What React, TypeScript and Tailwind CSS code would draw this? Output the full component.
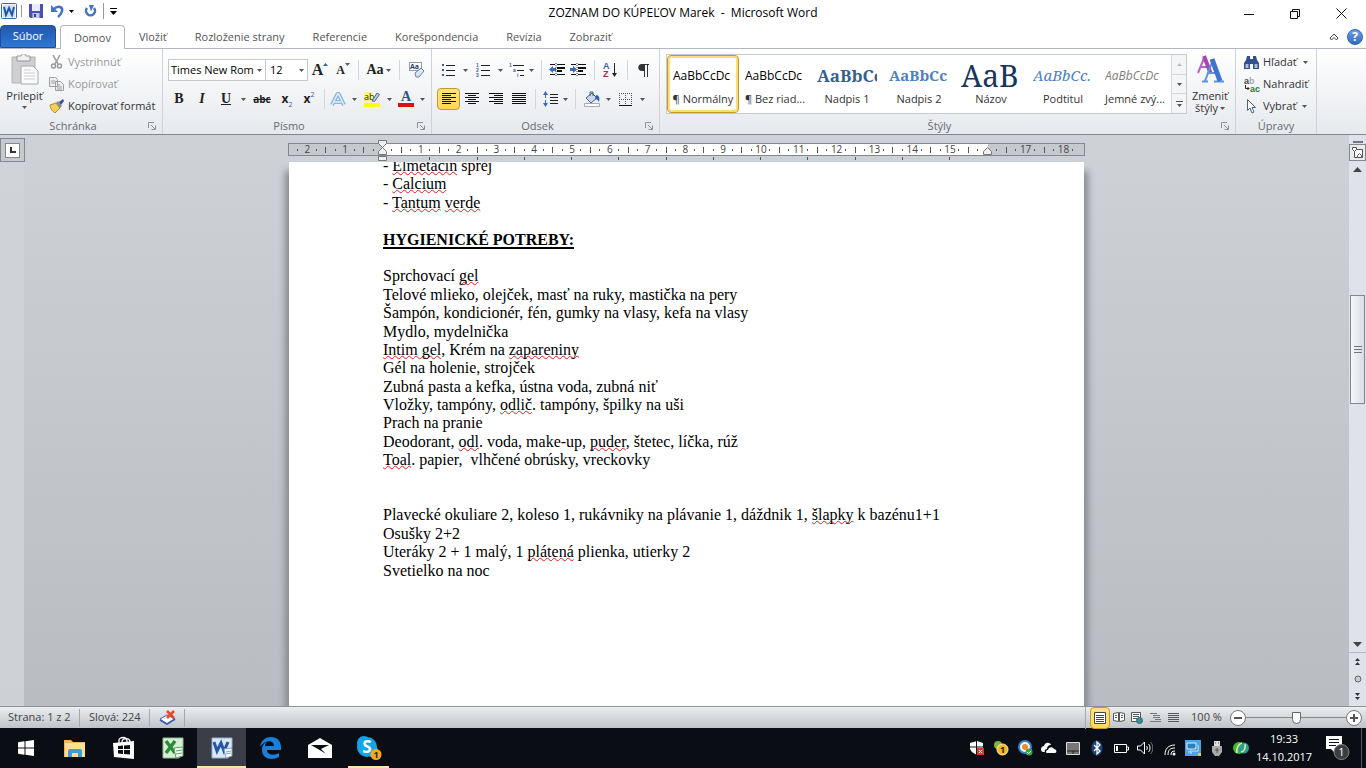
import { useState } from "react";
import type { ReactNode } from "react";

const RIBBON_TABS = ["Domov", "Vložiť", "Rozloženie strany", "Referencie", "Korešpondencia", "Revízia", "Zobraziť"];

const STYLES = [
  { name: "¶ Normálny", sample: "AaBbCcDc", look: "text-xs text-black" },
  { name: "¶ Bez riad...", sample: "AaBbCcDc", look: "text-xs text-black" },
  { name: "Nadpis 1", sample: "AaBbCc", look: "font-['Noto_Serif','Liberation_Serif',serif] font-bold text-[17px] text-[#365f91]" },
  { name: "Nadpis 2", sample: "AaBbCc", look: "font-['Noto_Serif','Liberation_Serif',serif] font-bold text-[15px] text-[#4f81bd]" },
  { name: "Názov", sample: "AaB", look: "font-['Noto_Serif','Liberation_Serif',serif] text-[30px] leading-7 text-[#17365d]" },
  { name: "Podtitul", sample: "AaBbCc.", look: "font-['Noto_Serif','Liberation_Serif',serif] italic text-[15px] text-[#4f81bd]" },
  { name: "Jemné zvý...", sample: "AaBbCcDc", look: "italic text-xs text-[#808080]" },
];

// Words between asterisks are flagged by the spell checker
const DOC_LINES = [
  "- *Elmetacin* sprej",
  "- *Calcium*",
  "- *Tantum* *verde*",
  "",
  "# HYGIENICKÉ POTREBY:",
  "",
  "Sprchovací *gel*",
  "Telové mlieko, olejček, masť na ruky, mastička na pery",
  "Šampón, kondicionér, fén, gumky na vlasy, kefa na vlasy",
  "Mydlo, mydelnička",
  "*Intim gel*, Krém na *zapareniny*",
  "Gél na holenie, strojček",
  "Zubná pasta a kefka, ústna voda, zubná niť",
  "Vložky, tampóny, *odlič*. tampóny, špilky na uši",
  "Prach na pranie",
  "Deodorant, *odl*. voda, make-up, *puder*, štetec, líčka, rúž",
  "*Toal*. papier,  vlhčené obrúsky, vreckovky",
  "",
  "",
  "Plavecké okuliare 2, koleso 1, rukávniky na plávanie 1, dáždnik 1, *šlapky* k bazénu1+1",
  "Osušky 2+2",
  "Uteráky 2 + 1 malý, 1 *plátená* plienka, utierky 2",
  "Svetielko na noc",
];

function Caret({ className = "text-[#555]" }: { className?: string }) {
  return (
    <svg width="5" height="3" viewBox="0 0 5 3" className={className}>
      <path d="M0 0h5L2.500 3z" fill="currentColor" />
    </svg>
  );
}

function Tool({ label, width, active, children }: { label: string; width: string; active?: boolean; children: ReactNode }) {
  return (
    <button
      aria-label={label}
      className={`${width} flex h-[22px] shrink-0 items-center justify-center ${
        active ? "rounded-sm border border-[#c29b29] bg-linear-to-b from-[#fde28a] to-[#ffd75e]" : ""
      }`}
    >
      {children}
    </button>
  );
}

function Sep({ width }: { width: string }) {
  return (
    <span className={`${width} flex shrink-0 justify-center`}>
      <span className="h-5 w-px bg-[#d3d6da]" />
    </span>
  );
}

function Lines({ rows, color = "#111" }: { rows: [number, number][]; color?: string }) {
  return (
    <svg width="14" height="12" viewBox="0 0 14 12" shapeRendering="crispEdges">
      {rows.map(([x, w], i) => (
        <rect key={i} x={x} y={i * 2} width={w} height="1" fill={color} />
      ))}
    </svg>
  );
}

function Group({ title, width, launcher = true, children }: { title: string; width: string; launcher?: boolean; children: ReactNode }) {
  return (
    <section className={`${width} flex shrink-0 flex-col border-r border-[#cfd2d7]`}>
      <div className="h-[69px]">{children}</div>
      <div className="flex h-4 items-center text-[#666a70]">
        <span className="flex-1 text-center">{title}</span>
        {launcher && (
          <button aria-label={`${title} – možnosti`} className="mr-1 flex w-3 justify-center">
            <svg width="8" height="8" viewBox="0 0 8 8" fill="none" stroke="#8d9299">
              <path d="M.5 6V.5H6M3 3l4 4M7.500 3.500v4h-4" />
            </svg>
          </button>
        )}
      </div>
    </section>
  );
}

function WordLogo() {
  return (
    <svg width="16" height="16" viewBox="0 0 16 16">
      <rect x=".5" y=".5" width="15" height="15" rx="1" fill="#f4f8fd" stroke="#3468b0" />
      <path d="M2 2h12v12H2z" fill="#cfe0f5" />
      <path d="M3 4l2 8L8 5l3 7 2-8" fill="none" stroke="#1f55a8" strokeWidth="2" />
    </svg>
  );
}

function TitleBar() {
  return (
    <header className="relative flex h-[25px] shrink-0 items-center bg-white">
      <div className="flex items-center pb-[3px] pl-px">
        <WordLogo />
        <span className="mx-1 h-3 w-px bg-[#999]" />
        <button aria-label="Uložiť" className="mr-2 ml-[3px]">
          <svg width="14" height="14" viewBox="0 0 14 14">
            <path d="M0 0h14v14H1.500L0 12.500z" fill="#4a4fb5" />
            <path d="M3 0h8v7H3z" fill="#e9edfb" />
            <path d="M3.500 9h7v5h-7z" fill="#c4c9e8" />
            <path d="M5 10h2v3H5z" fill="#33388f" />
          </svg>
        </button>
        <button aria-label="Späť">
          <svg width="13" height="14" viewBox="0 0 13 14" fill="none">
            <path d="M3 5C7 1 12 3 11 7c-.5 3-2.500 4.500-4 6" stroke="#4474c8" strokeWidth="2.500" />
            <path d="M0 1v7h7z" fill="#4474c8" />
          </svg>
        </button>
        <button aria-label="Možnosti späť" className="px-[5px]"><Caret className="text-black" /></button>
        <button aria-label="Opakovať" className="ml-[5px]">
          <svg width="13" height="13" viewBox="0 0 13 13" fill="none">
            <path d="M3 3a4.500 4.500 0 1 0 7 0" stroke="#4474c8" strokeWidth="2.500" />
            <path d="M5 0h5L7 6.500z" fill="#4474c8" />
          </svg>
        </button>
        <span className="mx-1.5 h-4 w-px bg-[#999]" />
        <button aria-label="Prispôsobiť panel">
          <svg width="7" height="7" viewBox="0 0 7 7"><path d="M0 0h7v1H0zM0 3h7L3.500 7z" /></svg>
        </button>
      </div>
      <h1 className="pointer-events-none absolute inset-x-0 text-center text-xs whitespace-pre text-black">
        ZOZNAM DO KÚPEĽOV Marek  -  Microsoft Word
      </h1>
      <div className="ml-auto flex h-full pt-0.5 pr-0.5">
        <button aria-label="Minimalizovať" className="flex w-[46px] items-center justify-center">
          <svg width="10" height="10"><path d="M0 5.500h10" stroke="#111" /></svg>
        </button>
        <button aria-label="Obnoviť" className="flex w-[46px] items-center justify-center">
          <svg width="10" height="10" fill="none" stroke="#111"><path d="M.5 2.500h7v7h-7zM2.500 2V.5h7v7H8" /></svg>
        </button>
        <button aria-label="Zavrieť" className="flex w-[46px] items-center justify-center">
          <svg width="11" height="11" stroke="#111"><path d="M.5.5l10 10m0-10l-10 10" /></svg>
        </button>
      </div>
    </header>
  );
}

function TabStrip() {
  const [active, setActive] = useState("Domov");
  return (
    <nav className="flex h-6 shrink-0 items-end border-b border-[#b4b8be] bg-white text-[#555]">
      <button className="mr-1 h-[23px] w-14 rounded-t-sm border border-[#1c4e9c] bg-linear-to-b from-[#2358ac] to-[#2f76d2] text-white">
        Súbor
      </button>
      {RIBBON_TABS.map((tab) => (
        <button
          key={tab}
          onClick={() => setActive(tab)}
          className={`pt-0.5 ${tab === active ? "-mb-px h-6 rounded-t-sm border border-b-0 border-[#b4b8be] bg-white px-[13px]" : "h-[23px] px-3.5"}`}
        >
          {tab}
        </button>
      ))}
      <div className="ml-auto flex h-full items-center gap-2 pr-[3px]">
        <button aria-label="Minimalizovať pás s nástrojmi">
          <svg width="10" height="8" viewBox="0 0 10 8" fill="none" stroke="#444">
            <path d="M1 5l4-4 4 4-1.500 2L5 4.500 2.500 7z" />
          </svg>
        </button>
        <button aria-label="Pomocník" className="size-4 rounded-full border border-[#2d62b0] bg-linear-to-b from-[#6da0e4] to-[#2f6cc4] text-xs leading-3 font-bold text-white">
          ?
        </button>
      </div>
    </nav>
  );
}

function ClipboardGroup() {
  return (
    <Group title="Schránka" width="w-[163px]">
      <div className="flex pt-0.5">
        <button className="flex w-[49px] flex-col items-center pt-[3px]">
          <svg width="28" height="31" viewBox="0 0 28 31">
            <path d="M1 3h23v26H1z" fill="#cfcfd2" stroke="#b4b4b8" />
            <path d="M6 2h4c0-3 5-3 5 0h4v5H6z" fill="#f0f0f0" stroke="#98989c" />
            <path d="M10 12h12l5 5v13H10z" fill="#fafafa" stroke="#a8a8ac" />
            <path d="M13 16h7M13 19h11M13 22h11M13 25h11" stroke="#cfcfd3" />
          </svg>
          <span className="mt-[3px] mb-0.5 leading-4 text-[#333]">Prilepiť</span>
          <Caret />
        </button>
        <div className="flex flex-col text-[#999]">
          <button className="flex h-[22px] items-center">
            <svg width="15" height="14" viewBox="0 0 15 14" fill="none" stroke="#999" strokeWidth="1.500" className="mr-1">
              <path d="M4 0l5 9M11 0L6 9" /><circle cx="4.500" cy="11" r="2" /><circle cx="10.500" cy="11" r="2" />
            </svg>
            Vystrihnúť
          </button>
          <button className="flex h-[22px] items-center">
            <svg width="15" height="14" viewBox="0 0 15 14" fill="#eee" stroke="#a0a0a4" className="mr-1">
              <path d="M.5.5h6l2 2v7h-8zM6.500 4.500h5l3 3v6h-8z" /><path d="M8 8h3M8 10h5M8 12h5M2 4h4M2 6h4" />
            </svg>
            Kopírovať
          </button>
          <button className="flex h-[22px] items-center text-[#333]">
            <svg width="15" height="14" viewBox="0 0 15 14" className="mr-1">
              <path d="M1 6l6-2 4 5-5 5C3 12 1 9 1 6z" fill="#f3cf5a" stroke="#b08d28" />
              <path d="M7 4l2-2 4 5-2 2z" fill="#8a8a92" />
              <path d="M10 3l4-3 1 2-3 4z" fill="#3a4f96" />
            </svg>
            Kopírovať formát
          </button>
        </div>
      </div>
    </Group>
  );
}

const serif = "font-['Liberation_Serif',serif] leading-4 text-[#222]";

function FontGroup() {
  return (
    <Group title="Písmo" width="w-[269px]">
      <div className="flex items-center pt-2.5 pl-[5px]">
        <div className="relative">
          <select aria-label="Písmo" className="h-[22px] w-[98px] appearance-none border border-[#c6c9ce] bg-white pl-0.5 text-black">
            <option>Times New Rom</option>
          </select>
          <span className="pointer-events-none absolute top-2 right-1 flex h-1.5 items-center bg-white"><Caret /></span>
        </div>
        <div className="relative">
          <select aria-label="Veľkosť písma" className="h-[22px] w-[42px] appearance-none border border-l-0 border-[#c6c9ce] bg-white pl-1 text-black">
            <option>12</option>
          </select>
          <span className="pointer-events-none absolute top-2 right-1 flex h-1.5 items-center"><Caret /></span>
        </div>
        <Tool label="Zväčšiť písmo" width="w-6">
          <span className={`${serif} text-base font-bold`}>A</span>
          <svg width="5" height="14"><path d="M0 3h5L2.500 0z" fill="#3a5fa8" /></svg>
        </Tool>
        <Tool label="Zmenšiť písmo" width="w-[22px]">
          <span className={`${serif} text-xs font-bold`}>A</span>
          <svg width="5" height="14"><path d="M0 0h5L2.500 3z" fill="#3a5fa8" /></svg>
        </Tool>
        <Sep width="w-2" />
        <Tool label="Zmeniť veľkosť písmen" width="w-[33px]">
          <span className={`${serif} mr-0.5 text-sm font-bold`}>Aa</span><Caret />
        </Tool>
        <Sep width="w-2" />
        <Tool label="Vymazať formátovanie" width="w-[26px]">
          <svg width="17" height="16" viewBox="0 0 17 16">
            <rect x="1.500" y=".5" width="12" height="8" fill="#fff" stroke="#8d9ab0" />
            <text x="2" y="7" fontSize="7" fontWeight="bold" fill="#223a70">Aa</text>
            <path d="M7 11l6-5 3 3-5 6H8z" fill="#dce4f2" stroke="#6c7fa5" />
          </svg>
        </Tool>
      </div>
      <div className="flex items-center pt-[7px] pl-[5px]">
        <Tool label="Tučné" width="w-[22px]"><span className={`${serif} text-sm font-bold`}>B</span></Tool>
        <Tool label="Kurzíva" width="w-6"><span className={`${serif} text-sm font-bold italic`}>I</span></Tool>
        <Tool label="Podčiarknuté" width="w-6"><span className={`${serif} text-sm font-bold underline`}>U</span></Tool>
        <Tool label="Možnosti podčiarknutia" width="w-2.5"><Caret /></Tool>
        <Tool label="Prečiarknuté" width="w-7"><span className="text-[10px] font-bold text-[#222] line-through">abc</span></Tool>
        <Tool label="Dolný index" width="w-[22px]">
          <span className="text-xs font-bold text-[#222]">x</span><span className="self-end text-[7px] text-[#3a5fa8]">2</span>
        </Tool>
        <Tool label="Horný index" width="w-[22px]">
          <span className="text-xs font-bold text-[#222]">x</span><span className="self-start pt-0.5 text-[7px] text-[#3a5fa8]">2</span>
        </Tool>
        <Sep width="w-2" />
        <Tool label="Textové efekty" width="w-5">
          <svg width="16" height="15" viewBox="0 0 16 15" fill="none" strokeLinejoin="round">
            <path d="M2 13L7.500 2h1L14 13M4.500 10h7" stroke="#86b6e2" strokeWidth="4" />
            <path d="M2 13L7.500 2h1L14 13M4.500 10h7" stroke="#e4f1fc" strokeWidth="1.500" />
          </svg>
        </Tool>
        <Tool label="Možnosti efektov" width="w-3"><Caret /></Tool>
        <Tool label="Farba zvýraznenia" width="w-6">
          <svg width="16" height="16" viewBox="0 0 16 16">
            <path d="M0 1h9v10H0z" fill="#fdf67c" />
            <text x="0" y="9" fontSize="9" fill="#222">ab</text>
            <path d="M8 10l5-8 2.500 1.500-5 7z" fill="#b9cbe8" stroke="#4a66a0" />
            <path d="M0 12h16v4H0z" fill="#ff0" />
          </svg>
        </Tool>
        <Tool label="Možnosti zvýraznenia" width="w-2.5"><Caret /></Tool>
        <Tool label="Farba písma" width="w-6">
          <span className="flex flex-col items-center border-b-4 border-[#e01010] px-[3px] font-['Liberation_Serif',serif] text-sm leading-3 font-bold text-[#34508c]">A</span>
        </Tool>
        <Tool label="Možnosti farby" width="w-2"><Caret /></Tool>
      </div>
    </Group>
  );
}

function ListIcon({ kind }: { kind: "bullets" | "numbers" | "multi" }) {
  return (
    <svg width="15" height="15" viewBox="0 0 15 15" className="font-['Liberation_Sans',sans-serif]" shapeRendering="crispEdges">
      {kind === "bullets" && <path d="M1 1h2v2H1zM1 6h2v2H1zM1 11h2v2H1z" fill="#3a5fa8" />}
      {kind === "numbers" && (
        <g fontSize="5" fontWeight="bold" fill="#3a5fa8">
          <text x="0" y="4">1</text><text x="0" y="9">2</text><text x="0" y="14">3</text>
        </g>
      )}
      {kind === "multi" ? (
        <g>
          <g fontSize="5" fontWeight="bold" fill="#3a5fa8">
            <text x="0" y="4">1</text><text x="4" y="9">a</text><text x="8" y="14">i</text>
          </g>
          <path d="M4 2h11v1H4zM8 7h7v1H8zM11 12h4v1h-4z" fill="#222" />
        </g>
      ) : (
        <path d="M5 2h9v1H5zM5 7h9v1H5zM5 12h9v1H5z" fill="#222" />
      )}
    </svg>
  );
}

function IndentIcon({ flip }: { flip?: boolean }) {
  return (
    <svg width="16" height="14" viewBox="0 0 16 14">
      <path d="M1 1h5v1H1zM8 1h8v1H8zM8 4h8v2H8zM8 7h5v2H8zM1 11h5v1H1zM8 11h8v1H8z" fill="#111" />
      <path d={flip ? "M7 6.500L3 3v2H0v3h3v2z" : "M0 6.500L4 3v2h3v3H4v2z"} fill="#3a69c0" />
      <path d="M7 0v14" stroke="#333" strokeDasharray="1 1" />
    </svg>
  );
}

function ParagraphGroup() {
  return (
    <Group title="Odsek" width="w-[228px]">
      <div className="flex items-center pt-2.5 pl-[5px]">
        <Tool label="Odrážky" width="w-[22px]"><ListIcon kind="bullets" /></Tool>
        <Tool label="Možnosti odrážok" width="w-3"><Caret /></Tool>
        <Tool label="Číslovanie" width="w-6"><ListIcon kind="numbers" /></Tool>
        <Tool label="Možnosti číslovania" width="w-2.5"><Caret /></Tool>
        <Tool label="Viacúrovňový zoznam" width="w-[22px]"><ListIcon kind="multi" /></Tool>
        <Tool label="Možnosti zoznamu" width="w-2"><Caret /></Tool>
        <Sep width="w-3" />
        <Tool label="Zmenšiť zarážku" width="w-5"><IndentIcon /></Tool>
        <Tool label="Zväčšiť zarážku" width="w-[22px]"><IndentIcon flip /></Tool>
        <Sep width="w-2.5" />
        <Tool label="Zoradiť" width="w-[22px]">
          <svg width="15" height="16" viewBox="0 0 15 16" className="font-['Liberation_Sans',sans-serif]">
            <text x="0" y="7" fontSize="9" fontWeight="bold" fill="#3a5fa8">A</text>
            <text x="0" y="15" fontSize="9" fontWeight="bold" fill="#a03030">Z</text>
            <path d="M11.500 1v11" stroke="#222" /><path d="M9 11h5l-2.500 4z" fill="#222" />
          </svg>
        </Tool>
        <Sep width="w-3" />
        <Tool label="Zobraziť značky" width="w-5">
          <svg width="11" height="13" viewBox="0 0 11 13">
            <path d="M4 0h7v1h-1v12H9V1H7v12H6V7H4C-1 7-1 0 4 0z" fill="#333" />
          </svg>
        </Tool>
      </div>
      <div className="flex items-center pt-[7px] pl-[5px]">
        <Tool label="Zarovnať vľavo" width="w-[23px]" active><Lines rows={[[0, 14], [0, 9], [0, 14], [0, 9], [0, 14], [0, 9]]} /></Tool>
        <Tool label="Centrovať" width="w-6"><Lines rows={[[0, 14], [3, 8], [0, 14], [3, 8], [0, 14], [3, 8]]} /></Tool>
        <Tool label="Zarovnať vpravo" width="w-6"><Lines rows={[[0, 14], [5, 9], [0, 14], [5, 9], [0, 14], [5, 9]]} /></Tool>
        <Tool label="Podľa okraja" width="w-[22px]"><Lines rows={[[0, 14], [0, 14], [0, 14], [0, 14], [0, 14], [0, 14]]} /></Tool>
        <Sep width="w-2.5" />
        <Tool label="Riadkovanie" width="w-5">
          <svg width="15" height="16" viewBox="0 0 15 16">
            <path d="M2.500 0L5 4H3v3H2V4H0zM2.500 16L5 12H3V9H2v3H0z" fill="#3a69c0" />
            <path d="M7 3h8v1H7zM7 6h8v1H7zM7 9h8v1H7zM7 12h8v1H7z" fill="#222" />
          </svg>
        </Tool>
        <Tool label="Možnosti riadkovania" width="w-2.5"><Caret /></Tool>
        <Sep width="w-2.5" />
        <Tool label="Podfarbenie" width="w-6">
          <svg width="16" height="16" viewBox="0 0 16 16">
            <path d="M2 7l6-5 5 5-6 5z" fill="#c9daf0" stroke="#3f6088" />
            <path d="M6 5V1h3v4" fill="none" stroke="#3f6088" />
            <path d="M12 4c3 0 4 3 3 7-1-2-2-3-4-3z" fill="#2f5fb0" />
            <path d="M.5 12.500h15v3H.5z" fill="#fff" stroke="#a8abb0" />
          </svg>
        </Tool>
        <Tool label="Možnosti podfarbenia" width="w-2"><Caret /></Tool>
        <Tool label="Orámovanie" width="w-[26px]">
          <svg width="13" height="13" viewBox="0 0 13 13" fill="none" stroke="#555">
            <path d="M.5 0v12M6.500 0v12M12.500 0v12M0 .5h13M0 6.500h13" strokeDasharray="1 1" />
            <path d="M0 12.500h13" stroke="#111" />
          </svg>
        </Tool>
        <Tool label="Možnosti orámovania" width="w-2"><Caret /></Tool>
      </div>
    </Group>
  );
}

function StylesGroup() {
  const [selected, setSelected] = useState("¶ Normálny");
  return (
    <Group title="Štýly" width="w-[576px]">
      <div className="flex pt-[5px] pl-1.5">
        <div className="flex h-[60px] border border-[#c6c9ce] bg-white">
          {STYLES.map((s) => (
            <button
              key={s.name}
              onClick={() => setSelected(s.name)}
              className={`flex w-[72px] flex-col items-center overflow-hidden border ${
                s.name === selected
                  ? "rounded-sm border-[#c29b29] shadow-[inset_0_0_0_2px_#fbdc7c]"
                  : "border-transparent"
              }`}
            >
              <span className="flex h-[35px] w-[60px] items-center overflow-hidden pt-1">
                <span className={`whitespace-nowrap ${s.look}`}>{s.sample}</span>
              </span>
              <span className="leading-4 whitespace-nowrap text-[#333]">{s.name}</span>
            </button>
          ))}
          <div className="flex w-[15px] flex-col border-l border-[#d4d7db] bg-[#f4f5f7]">
            <button aria-label="Predchádzajúce štýly" className="flex flex-1 items-center justify-center">
              <svg width="5" height="3"><path d="M0 3h5L2.500 0z" fill="#bbb" /></svg>
            </button>
            <button aria-label="Ďalšie štýly" className="flex flex-1 items-center justify-center border-y border-[#d4d7db]"><Caret /></button>
            <button aria-label="Všetky štýly" className="flex flex-1 items-center justify-center">
              <svg width="7" height="6"><path d="M0 0h7v1H0zM1 3h5L3.500 6z" fill="#555" /></svg>
            </button>
          </div>
        </div>
        <button className="flex w-[46px] flex-col items-center leading-3 text-[#333]">
          <svg width="30" height="30" viewBox="0 0 30 30" fill="none">
            <path d="M3 19L9.500 3M4.500 13h8" stroke="#b565c4" strokeWidth="2" />
            <path d="M9 2l6.500 17" stroke="#a347b4" strokeWidth="4" />
            <path d="M10 27l8-21M12 19h10M7 27.500h6M19 27.500h10" stroke="#5c93e2" strokeWidth="2" />
            <path d="M17 5l8 22" stroke="#3f74cc" strokeWidth="5" />
          </svg>
          <span className="mt-1.5">Zmeniť</span>
          <span className="flex items-center gap-0.5">štýly <Caret /></span>
        </button>
      </div>
    </Group>
  );
}

function EditingGroup() {
  return (
    <Group title="Úpravy" width="w-[81px]" launcher={false}>
      <div className="flex flex-col pt-0.5 pl-2 text-[#333]">
        <button className="flex h-[22px] items-center">
          <svg width="15" height="13" viewBox="0 0 15 13" className="mr-1">
            <path d="M3 0h3v3h3V0h3l1 4 2 3v6H9V8H6v5H0V7l2-3z" fill="#34508c" />
            <path d="M1.500 8h3v4h-3zM10.500 8h3v4h-3z" fill="#a9bde0" />
          </svg>
          Hľadať<span className="ml-1.5"><Caret /></span>
        </button>
        <button className="flex h-[22px] items-center">
          <svg width="16" height="15" viewBox="0 0 16 15" className="mr-[3px] font-['Liberation_Sans',sans-serif]">
            <text x="0" y="7" fontSize="9" fontWeight="bold" fill="#444">a<tspan fill="#aaa">b</tspan></text>
            <path d="M1.500 8v3.500H5M3.500 10L5 11.500 3.500 13" fill="none" stroke="#222" />
            <text x="6" y="15" fontSize="9" fontWeight="bold" fill="#2a7a34">ac</text>
          </svg>
          Nahradiť
        </button>
        <button className="flex h-[22px] items-center">
          <svg width="15" height="15" viewBox="0 0 15 15" className="mr-1">
            <path d="M3.500.5v11l2.500-2.500 2 5 2-1-2-4.500h3.500z" fill="#fff" stroke="#4a6288" />
          </svg>
          Vybrať<span className="ml-1.5"><Caret /></span>
        </button>
      </div>
    </Group>
  );
}

// Horizontal ruler, 1 cm = 37.8 px, zero at the left text margin
function Ruler() {
  const cm = 37.8;
  const zero = 94;
  const quarters = Array.from({ length: 83 }, (_, i) => i - 9);
  return (
    <svg width="797" height="24" viewBox="0 0 797 24" className="font-['Open_Sans',sans-serif]">
      <rect x=".5" y="5.500" width="796" height="12" fill="#c6c9ce" stroke="#83888f" />
      <rect x={zero} y="6" width="606" height="11" fill="#fff" />
      {quarters.map((q) => {
        const x = zero + (q * cm) / 4;
        if (q === 0 || q === 64) return null;
        if (q % 4 === 0) {
          return <text key={q} x={x + 1} y="15" fontSize="10" textAnchor="middle" fill="#444">{Math.abs(q / 4)}</text>;
        }
        const half = q % 2 === 0;
        return <rect key={q} x={Math.round(x)} y={half ? 9 : 11} width="1" height={half ? 6 : 2} fill="#555" />;
      })}
      {Array.from({ length: 12 }, (_, i) => (
        <rect key={i} x={Math.round(zero + (i + 1) * 47.25)} y="19" width="1" height="3" fill="#555" />
      ))}
      <path d="M90.500 2.500h8v3l-4 4-4-4zM94.500 9.500l4 4v3h-8v-3zM90.500 18.500h8v4h-8zM699.500 9.500l4 4v3h-8v-3z" fill="#f0f0ee" stroke="#777" />
    </svg>
  );
}

function DocLine({ text }: { text: string }) {
  if (text.startsWith("# ")) {
    return <h2 className="font-bold underline decoration-2 underline-offset-2">{text.slice(2)}</h2>;
  }
  return (
    <p className="whitespace-pre">
      {text === "" && "\u00a0"}
      {text.split("*").map((part, i) =>
        i % 2 ? (
          <span key={i} className="underline decoration-[#e02020] decoration-wavy decoration-1 underline-offset-0 [text-decoration-skip-ink:none]">{part}</span>
        ) : (
          part
        )
      )}
    </p>
  );
}

function ScrollBar() {
  return (
    <aside className="flex w-[17px] shrink-0 flex-col items-center bg-[#dfe2e8]">
      <span className="mt-1.5 h-0.5 w-2.5 bg-[#777]" />
      <button aria-label="Pravítko" className="mt-px flex h-[17px] w-full items-center justify-center border border-[#83888f] bg-[#e9ebef]">
        <svg width="11" height="11" viewBox="0 0 11 11" fill="#fff" stroke="#555">
          <path d="M3 2.500h7.500v8h-8V5z" />
          <path d="M.5.500h4v2l-2 2-2-2zM5.500 10.500v-2l2-2 2 2v2z" />
        </svg>
      </button>
      <button aria-label="Nahor" className="flex h-[17px] w-full items-center justify-center">
        <svg width="9" height="5"><path d="M0 5h9L4.500 0z" fill="#444" /></svg>
      </button>
      <div className="flex w-full flex-1 flex-col items-center">
        <div className="flex-3" />
        <div className="flex h-[109px] w-[15px] flex-col items-center justify-center gap-0.5 border border-[#83888f] bg-linear-to-r from-[#f6f7fa] to-[#d9dce3]">
          <span className="h-px w-2 bg-[#777]" />
          <span className="h-px w-2 bg-[#777]" />
          <span className="h-px w-2 bg-[#777]" />
        </div>
        <div className="flex-6" />
      </div>
      <button aria-label="Nadol" className="flex h-4 w-full items-center justify-center border-b border-[#b5b9c0]">
        <svg width="9" height="5"><path d="M0 0h9L4.500 5z" fill="#444" /></svg>
      </button>
      <button aria-label="Predchádzajúca strana" className="flex h-[17px] items-center">
        <svg width="5" height="8"><path d="M0 3h5L2.500 0zM0 7h5L2.500 4z" fill="#333" /></svg>
      </button>
      <button aria-label="Vybrať objekt prehľadávania" className="flex h-[17px] items-center">
        <svg width="8" height="8"><circle cx="4" cy="4" r="3" fill="#ccc" stroke="#666" /></svg>
      </button>
      <button aria-label="Ďalšia strana" className="flex h-[19px] items-center">
        <svg width="5" height="8"><path d="M0 0h5L2.500 3zM0 4h5L2.500 7z" fill="#333" /></svg>
      </button>
    </aside>
  );
}

function Workspace() {
  return (
    <div className="flex min-h-0 flex-1 border-t border-[#83888f] bg-linear-to-b from-[#ced1d6] to-[#b9bcc1]">
      <div className="w-6 shrink-0 bg-linear-to-b from-[#d0d3d8] to-[#cdd0d5]">
        <button aria-label="Zarážka" className="mt-[3px] flex h-6 w-[25px] items-center justify-center border border-[#83888f] bg-[#c6c9ce]">
          <span className="flex size-[15px] items-center justify-center border border-[#83888f] bg-white">
            <span className="size-1.5 border-b-2 border-l-2 border-[#333]" />
          </span>
        </button>
      </div>
      <main className="flex min-w-0 flex-1 flex-col items-center">
        <div className="h-[27px] pt-[3px]"><Ruler /></div>
        <article className="min-h-0 w-[795px] flex-1 overflow-hidden bg-white pl-[94px] font-['Liberation_Serif',serif] text-base text-black shadow-[5px_8px_7px_-1px_#868a90,-5px_8px_7px_-1px_#868a90]">
          <div className="-mt-[5px] leading-[1.15]">
            {DOC_LINES.map((line, i) => <DocLine key={i} text={line} />)}
          </div>
        </article>
      </main>
      <ScrollBar />
    </div>
  );
}

function StatusBar() {
  const [zoom, setZoom] = useState(100);
  return (
    <footer className="z-10 flex h-[22px] shrink-0 items-center border-t border-[#8d9299] bg-linear-to-b from-[#eceef0] to-[#bfc3c8] text-[#444]">
      <button className="w-[79px] pl-2 text-left">Strana: 1 z 2</button>
      <button className="h-[18px] w-[71px] border-x border-[#a5a9af] pl-[9px] text-left">Slová: 224</button>
      <button aria-label="Kontrola pravopisu" className="flex h-[18px] w-[35px] items-center justify-center border-r border-[#a5a9af]">
        <svg width="17" height="15" viewBox="0 0 17 15">
          <path d="M1 9l7-4 8 4-8 5z" fill="#fff" stroke="#3f62b0" /><path d="M1 10l7 4 8-5" fill="none" stroke="#3f62b0" strokeWidth="2" />
          <path d="M8 1l7 7m0-7L8 8" stroke="#e8482c" strokeWidth="2.500" />
        </svg>
      </button>
      <div className="ml-auto flex items-center border-l border-[#a5a9af] pl-1">
        <Tool label="Rozloženie pri tlači" width="w-5" active>
          <svg width="12" height="12" fill="#fff" stroke="#444"><path d="M.5.5h11v11H.5zM2 3.500h8M2 5.500h8M2 7.500h8M2 9.500h8" /></svg>
        </Tool>
        <Tool label="Čítanie na celej obrazovke" width="w-[18px]">
          <svg width="12" height="11" fill="#fff" stroke="#555"><path d="M.5 1.500L5.500.5v9l-5-1zM6.500.5l5 1v7l-5 1zM2 3.500h2M2 5.500h2M8 3.500h2M8 5.500h2" /></svg>
        </Tool>
        <Tool label="Webové rozloženie" width="w-[18px]">
          <svg width="12" height="12"><path d="M.5.5h9v9h-9zM2 2.500h6M2 4.500h6M2 6.500h4" fill="#fff" stroke="#555" /><circle cx="8.500" cy="8.500" r="3" fill="#3c8f8a" stroke="#2c5f88" /></svg>
        </Tool>
        <Tool label="Prehľad" width="w-[18px]">
          <svg width="11" height="10" stroke="#777"><path d="M0 .5h7M3 2.500h7M3 4.500h7M5 6.500h6M0 8.500h11" /></svg>
        </Tool>
        <Tool label="Koncept" width="w-[19px]">
          <svg width="11" height="10" stroke="#555"><path d="M0 .5h11M0 2.500h11M0 4.500h11M0 6.500h11M0 8.500h11" /></svg>
        </Tool>
        <button className="w-[47px] text-center">{zoom} %</button>
        <button aria-label="Oddialiť" onClick={() => setZoom(Math.max(10, zoom - 10))} className="flex size-4 items-center justify-center rounded-full border border-[#777] bg-white">
          <span className="h-0.5 w-2 bg-[#555]" />
        </button>
        <input
          type="range"
          aria-label="Lupa"
          min={10}
          max={190}
          value={zoom}
          onChange={(e) => setZoom(Number(e.target.value))}
          className="h-3 w-[100px] appearance-none bg-[linear-gradient(#888,#888)] bg-[length:100%_1px] bg-center bg-no-repeat [&::-webkit-slider-thumb]:h-3 [&::-webkit-slider-thumb]:w-[9px] [&::-webkit-slider-thumb]:appearance-none [&::-webkit-slider-thumb]:rounded-b-full [&::-webkit-slider-thumb]:border [&::-webkit-slider-thumb]:border-[#666] [&::-webkit-slider-thumb]:bg-white"
        />
        <button aria-label="Priblížiť" onClick={() => setZoom(Math.min(190, zoom + 10))} className="mr-1 flex size-4 items-center justify-center rounded-full border border-[#777] bg-white">
          <svg width="8" height="8"><path d="M3 0h2v3h3v2H5v3H3V5H0V3h3z" fill="#555" /></svg>
        </button>
      </div>
    </footer>
  );
}

const TASKS: { name: string; state?: "active" | "open"; icon: ReactNode }[] = [
  { name: "Štart", icon: <svg width="16" height="16" viewBox="0 0 16 16" fill="#fff"><path d="M0 2.300l6.500-1v6.200H0zM7.500 1.200L16 0v7.500H7.500zM0 8.500h6.500v6.200l-6.500-1zM7.500 8.500H16V16l-8.500-1.200z" /></svg> },
  {
    name: "Prieskumník",
    icon: (
      <svg width="22" height="18" viewBox="0 0 22 18">
        <path d="M0 1h7l2 2h12v15H0z" fill="#e9b955" /><path d="M1 4h20v14H1z" fill="#fbe08f" />
        <path d="M4 18v-6a2 2 0 0 1 2-2h10a2 2 0 0 1 2 2v6h-4v-4H8v4z" fill="#3a9fd6" />
      </svg>
    ),
  },
  {
    name: "Obchod",
    icon: (
      <svg width="22" height="24" viewBox="0 0 22 24">
        <path d="M6 7V4c0-3 8-4 8 1v2M9 6c0-4 8-5 8 0" fill="none" stroke="#fff" strokeWidth="1.300" />
        <path d="M0 7l21-2v18L1 21z" fill="#fff" />
        <path d="M5 10l5-.5V13H5zM11 9.500l6-.5v4h-6zM5 14h5v4l-5-.5zM11 14h6v4.500l-6-.5z" fill="#0a0d12" />
      </svg>
    ),
  },
  {
    name: "Excel",
    icon: (
      <svg width="22" height="22" viewBox="0 0 22 22">
        <path d="M1 1h20v9l-4 11H1z" fill="#d9eed6" stroke="#8fbf8a" />
        <path d="M4 4l9 12M13 4L4 16" stroke="#2f8a3a" strokeWidth="3.500" />
        <path d="M12 11l9-1v9l-7 2z" fill="#f4fbf3" stroke="#5ba362" /><path d="M14 14l6-1M14 17l6-1" stroke="#5ba362" />
      </svg>
    ),
  },
  {
    name: "Word",
    state: "active",
    icon: (
      <svg width="22" height="22" viewBox="0 0 22 22">
        <path d="M1 1h20v9l-4 11H1z" fill="#dbe8f8" stroke="#8fb1dc" />
        <path d="M3 5l3 9 4-8 3 8 4-9" fill="none" stroke="#2456a8" strokeWidth="3" />
        <path d="M13 12l8-1v8l-6 2z" fill="#fff" stroke="#7d9fd0" /><path d="M15 15l5-1M15 17l5-1" stroke="#7d9fd0" />
      </svg>
    ),
  },
  {
    name: "Edge",
    icon: (
      <svg width="22" height="22" viewBox="0 0 22 22">
        <path d="M0 10C1 3 6 0 11 0c6 0 10 4 10 10v3H7c0 5 7 6 12 3v4c-7 4-17 2-17-7 0-4 2-7 5-8-2 2-2 3-2 4h9c0-7-10-6-14 1z" fill="#1b7ed8" />
      </svg>
    ),
  },
  {
    name: "Pošta",
    icon: (
      <svg width="24" height="20" viewBox="0 0 24 20">
        <path d="M0 7l12-7 12 7v13H0z" fill="#fff" /><path d="M3 7h18l-8 4 5 5-8-5z" fill="#0a0d12" />
      </svg>
    ),
  },
  {
    name: "Skype",
    state: "open",
    icon: (
      <svg width="26" height="26" viewBox="0 0 26 26">
        <circle cx="8" cy="8" r="7" fill="#12a5e8" /><circle cx="11" cy="12" r="10" fill="#12a5e8" /><circle cx="16" cy="16" r="6" fill="#12a5e8" />
        <text x="11" y="18" fontSize="17" fontWeight="bold" textAnchor="middle" fill="#fff">S</text>
        <circle cx="20" cy="19.500" r="5.500" fill="#f7a823" />
        <text x="20" y="23" fontSize="9" fontWeight="bold" textAnchor="middle" fill="#222">1</text>
      </svg>
    ),
  },
];

const TRAY: { name: string; icon: ReactNode }[] = [
  {
    name: "Defender",
    icon: <><path d="M1 3l7-2 6 2v5c0 4-3 6-6 7-4-2-7-4-7-7z" fill="#fff" /><path d="M7.500 1v14M1 7h13" stroke="#10141a" /><path d="M8 8h7v7H8z" fill="#dd3a32" /><path d="M10 10l3 3m0-3l-3 3" stroke="#fff" /></>,
  },
  {
    name: "Správy",
    icon: <><circle cx="5" cy="5" r="4" fill="#7cb82f" /><circle cx="9.500" cy="9.500" r="5.500" fill="#f5b62c" stroke="#fff3c4" /><text x="9.500" y="13" fontSize="9" fontWeight="bold" textAnchor="middle" fill="#222">1</text></>,
  },
  {
    name: "Zálohovanie",
    icon: <><circle cx="8" cy="7" r="6" fill="#fff" stroke="#2b83d8" strokeWidth="2" /><circle cx="8" cy="7" r="3" fill="#f08a24" /><circle cx="12" cy="12" r="3.500" fill="#35a34a" /><path d="M10 12l1.500 1.500L14 11" fill="none" stroke="#fff" /></>,
  },
  { name: "OneDrive", icon: <><path d="M0 9c0-2 2-3 3-3 1-4 6-4 7-1-3 0-4 2-4 4-2 0-3 2-2 3H2c-1 0-2-1-2-3z" fill="#fff" /><path d="M5 12c0-2 2-2 2-2 1-4 5-3 6-1 3 0 3 4 1 4H7c-1 0-2 0-2-1z" fill="#fff" /></> },
  { name: "Touchpad", icon: <><path d="M1.500 2.500h13v12h-13z" fill="#777" stroke="#ddd" /><path d="M2 11h12M8 11v3" stroke="#222" /></> },
  { name: "Bluetooth", icon: <><ellipse cx="8" cy="8" rx="5.500" ry="7.500" fill="#17447c" /><path d="M5 5l6 6-3 3V2l3 3-6 6" fill="none" stroke="#fff" strokeWidth="1.300" /></> },
  { name: "Batéria", icon: <><path d="M1.500 4.500h12v8h-12zM14 7h1.500v3H14" fill="none" stroke="#fff" /><path d="M3 6h2v5H3z" fill="#fff" /></> },
  { name: "Hlasitosť", icon: <><path d="M.5 6h3l4-4v12l-4-4h-3z" fill="none" stroke="#fff" /><path d="M9.500 6c1 1 1 3 0 4M11.500 4c2 2 2 6 0 8" fill="none" stroke="#fff" /><path d="M13.500 2c3 3 3 9 0 12" fill="none" stroke="#777" /></> },
  { name: "Wi-Fi", icon: <><circle cx="13" cy="14" r="1.500" fill="#fff" /><path d="M10 15c0-3 1-4 4-4M7 15c0-5 2-7 7-7M4 15C4 9 7 5 14 5" fill="none" stroke="#fff" /></> },
  { name: "Grafika Intel", icon: <><path d="M0 0h16v16H0z" fill="#4aa5dc" /><path d="M2 3h9v6H2zM5 11h8V5M3 12h3v2" fill="#2a7fc0" stroke="#d8eefa" /><path d="M13 13h3v3h-3z" fill="#e9c94a" /></> },
  { name: "USB", icon: <><path d="M5 1h6v5H5z" fill="#ddd" /><path d="M3 6h10v6l-3 4H6l-3-4z" fill="#aaa" /><path d="M6 3h1M9 3h1M8 8v5M6 10h4" stroke="#555" /></> },
  { name: "Sieť", icon: <><circle cx="6" cy="8" r="6" fill="#48b52c" /><circle cx="10.500" cy="8" r="5.500" fill="#2f9f8a" /><path d="M4 13c-1-4 1-9 5-10M8 12c3 0 5-4 4-8" fill="none" stroke="#d5f2c4" strokeWidth="1.500" /></> },
];

function Taskbar() {
  return (
    <footer className="flex h-10 shrink-0 bg-[#0a0e14] text-white">
      <div className="flex pl-px">
        {TASKS.map((t) => (
          <button
            key={t.name}
            aria-label={t.name}
            className={`relative flex w-[49px] items-center justify-center ${t.state === "active" ? "bg-[#3b3f45]" : ""}`}
          >
            {t.icon}
            {t.state && <span className={`absolute bottom-0 h-0.5 bg-[#fce4a4] ${t.state === "active" ? "inset-x-0" : "inset-x-1"}`} />}
          </button>
        ))}
      </div>
      <div className="ml-auto flex items-center">
        {TRAY.map((t) => (
          <button key={t.name} aria-label={t.name} className="flex w-6 justify-center">
            <svg width="16" height="16" viewBox="0 0 16 16">{t.icon}</svg>
          </button>
        ))}
        <button className="w-[62px] text-center leading-[18px]">
          <time className="block">19:33</time>
          <time className="block">14.10.2017</time>
        </button>
        <button aria-label="Centrum akcií" className="flex w-[46px] justify-center">
          <svg width="24" height="24" viewBox="0 0 24 24">
            <path d="M0 0h16v13H9v4l-4-4H0z" fill="#fff" /><path d="M3 3.500h10M3 6.500h10M3 9.500h7" stroke="#10141a" />
            <circle cx="15.500" cy="16" r="7.500" fill="#3a3d42" stroke="#888" />
            <text x="15.500" y="20" fontSize="11" textAnchor="middle" fill="#fff">1</text>
          </svg>
        </button>
        <span className="mr-1 h-10 w-px bg-[#555]" />
      </div>
    </footer>
  );
}

export default function App() {
  return (
    <div className="flex h-screen flex-col overflow-hidden bg-white font-['Open_Sans','Noto_Sans',sans-serif] text-[11px]">
      <TitleBar />
      <TabStrip />
      <div className="flex h-[85px] shrink-0 bg-linear-to-b from-white to-[#e6e9ed]">
        <ClipboardGroup />
        <FontGroup />
        <ParagraphGroup />
        <StylesGroup />
        <EditingGroup />
      </div>
      <Workspace />
      <StatusBar />
      <Taskbar />
    </div>
  );
}
